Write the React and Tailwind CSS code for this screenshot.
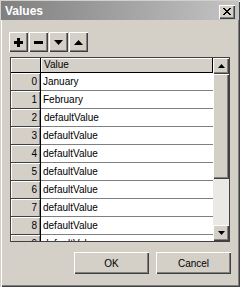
import React from "react";

const font = { fontFamily: '"Liberation Sans", Arial, sans-serif' };

const raised =
  "shadow-[inset_1px_1px_0_#ffffff,inset_-1px_-1px_0_#404040,inset_-2px_-2px_0_#808080]";

function XGlyph() {
  const rows = [
    "XX....XX",
    ".XX..XX.",
    "..XXXX..",
    "...XX...",
    "..XXXX..",
    ".XX..XX.",
    "XX....XX",
  ];
  const rects = [];
  rows.forEach((r, y) =>
    r.split("").forEach((c, x) => {
      if (c === "X") rects.push(<rect key={x + "-" + y} x={x} y={y} width="1" height="1" />);
    })
  );
  return (
    <svg width="8" height="7" viewBox="0 0 8 7" shapeRendering="crispEdges" fill="#000">
      {rects}
    </svg>
  );
}

function ToolButton({ children }) {
  return (
    <div className={`w-[19px] h-[20px] bg-[#d4d0c8] flex items-center justify-center ${raised}`}>
      {children}
    </div>
  );
}

function Tri({ dir, w = 9, h = 5 }) {
  const pts = dir === "down" ? `0,0 ${w},0 ${w / 2},${h}` : `0,${h} ${w},${h} ${w / 2},0`;
  return (
    <svg width={w} height={h} viewBox={`0 0 ${w} ${h}`}>
      <polygon points={pts} fill="#000" />
    </svg>
  );
}

const rows = [
  "January",
  "February",
  "defaultValue",
  "defaultValue",
  "defaultValue",
  "defaultValue",
  "defaultValue",
  "defaultValue",
  "defaultValue",
  "defaultValue",
];

export default function App() {
  return (
    <div
      className="w-[240px] h-[287px] bg-[#d4d0c8] flex flex-col overflow-hidden shadow-[inset_1px_1px_0_#d4d0c8,inset_2px_2px_0_#ffffff,inset_-1px_-1px_0_#404040,inset_-2px_-2px_0_#808080] text-black"
      style={font}
    >
      {/* title bar */}
      <div className="mt-[1px] mx-[1px] h-[19px] flex items-center bg-linear-to-r from-[#808080] to-[#c4c4c4] pl-[4px] pr-[4px]">
        <span className="text-[12px] font-bold text-white leading-none">Values</span>
        <div className="ml-auto mt-[2px] w-[16px] h-[14px] bg-[#d4d0c8] flex items-center justify-center shadow-[inset_1px_1px_0_#ffffff,inset_-1px_-1px_0_#404040,inset_-2px_-2px_0_#808080]">
          <XGlyph />
        </div>
      </div>

      {/* toolbar */}
      <div className="mt-[12px] ml-[9px] flex gap-[1px]">
        <ToolButton>
          <svg width="9" height="9" viewBox="0 0 9 9" shapeRendering="crispEdges">
            <rect x="0" y="3" width="9" height="3" fill="#000" />
            <rect x="3" y="0" width="3" height="9" fill="#000" />
          </svg>
        </ToolButton>
        <ToolButton>
          <svg width="9" height="3" viewBox="0 0 9 3" shapeRendering="crispEdges">
            <rect x="0" y="0" width="9" height="3" fill="#000" />
          </svg>
        </ToolButton>
        <ToolButton>
          <Tri dir="down" />
        </ToolButton>
        <ToolButton>
          <Tri dir="up" />
        </ToolButton>
      </div>

      {/* grid */}
      <div className="mt-[5px] ml-[10px] w-[220px] h-[185px] border border-[#404040] flex overflow-hidden bg-[#d4d0c8]">
        <div className="w-[202px] flex flex-col overflow-hidden">
          <div className="flex h-[15px] shrink-0 border-b border-black">
            <div className="w-[30px] border-r border-black shadow-[inset_1px_1px_0_#ffffff]" />
            <div className="flex-1 border-r border-black shadow-[inset_1px_1px_0_#ffffff] text-[10px] leading-[14px] pl-[3px]">
              Value
            </div>
          </div>
          {rows.map((r, i) => (
            <div key={i} className="flex h-[18px] shrink-0">
              <div className="w-[30px] border-r border-black flex">
                <div className="flex-1 border-b border-[#404040] bg-[#d4d0c8] shadow-[inset_1px_1px_0_#ffffff,inset_-1px_0_0_#808080] text-[10px] leading-[17px] text-right pr-[3px]">
                  {i}
                </div>
              </div>
              <div
                className={`flex-1 bg-white border-b border-[#808080] text-[10px] leading-[17px] ${
                  i === 2 ? "pl-[3px]" : "pl-[2px]"
                }`}
              >
                {r}
              </div>
            </div>
          ))}
        </div>
        {/* scrollbar */}
        <div className="w-[16px] flex flex-col">
          <div className={`h-[16px] shrink-0 bg-[#d4d0c8] flex items-center justify-center ${raised}`}>
            <Tri dir="up" w={7} h={4} />
          </div>
          <div className={`h-[105px] shrink-0 bg-[#d4d0c8] ${raised}`} />
          <div className="h-[46px] shrink-0 bg-[#ebe9e5]" />
          <div className={`h-[16px] shrink-0 bg-[#d4d0c8] flex items-center justify-center ${raised}`}>
            <Tri dir="down" w={7} h={4} />
          </div>
        </div>
      </div>

      {/* buttons */}
      <div className="mt-[10px] ml-[74px] flex gap-[7px]">
        <div className={`w-[75px] h-[22px] bg-[#d4d0c8] flex items-center justify-center text-[10px] ${raised}`}>
          OK
        </div>
        <div className={`w-[75px] h-[22px] bg-[#d4d0c8] flex items-center justify-center text-[10px] ${raised}`}>
          Cancel
        </div>
      </div>
    </div>
  );
}
